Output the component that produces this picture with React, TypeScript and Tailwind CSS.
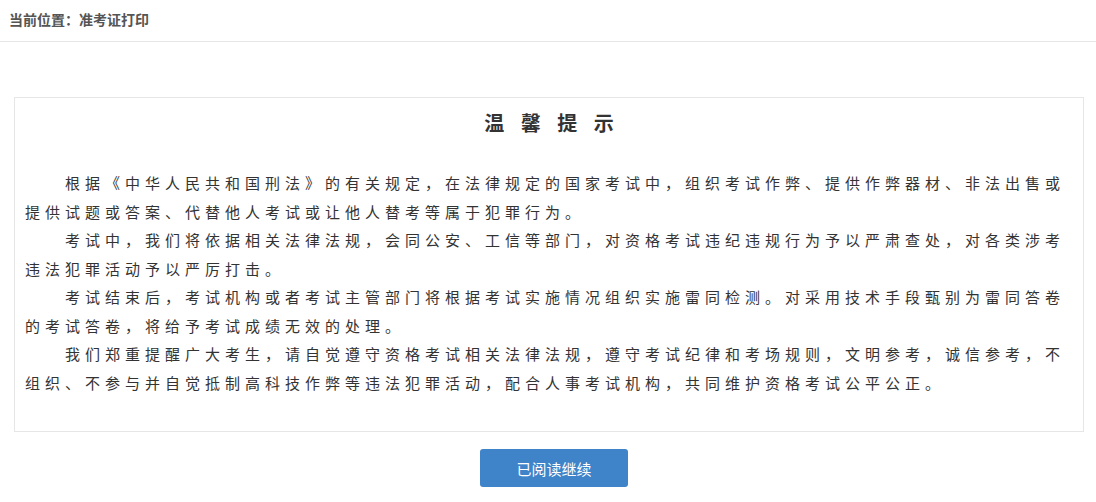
import React from "react";

const paras = [
  "根据《中华人民共和国刑法》的有关规定，在法律规定的国家考试中，组织考试作弊、提供作弊器材、非法出售或提供试题或答案、代替他人考试或让他人替考等属于犯罪行为。",
  "考试中，我们将依据相关法律法规，会同公安、工信等部门，对资格考试违纪违规行为予以严肃查处，对各类涉考违法犯罪活动予以严厉打击。",
  "考试结束后，考试机构或者考试主管部门将根据考试实施情况组织实施雷同检测。对采用技术手段甄别为雷同答卷的考试答卷，将给予考试成绩无效的处理。",
  "我们郑重提醒广大考生，请自觉遵守资格考试相关法律法规，遵守考试纪律和考场规则，文明参考，诚信参考，不组织、不参与并自觉抵制高科技作弊等违法犯罪活动，配合人事考试机构，共同维护资格考试公平公正。",
];

export default function App() {
  return (
    <div
      className="w-[1096px] h-[502px] bg-white overflow-hidden"
      style={{ fontFamily: '"Noto Sans CJK SC", "Noto Sans", sans-serif' }}
    >
      <div className="h-[42px] border-b border-[#e6e6e6] flex items-center pl-[9px] pb-[4px]">
        <span className="text-[14px] font-bold text-[#555555] leading-none">当前位置：准考证打印</span>
      </div>
      <div className="mt-[55px] ml-[14px] w-[1070px] border border-[#e6e6e6] px-[10px] pt-[12px] pb-[34px]">
        <div className="text-center text-[20px] leading-[26px] font-bold text-[#333333] tracking-[6px] pl-[6px]">
          温 馨 提 示
        </div>
        <div className="mt-[33px] text-[15px] leading-[28.5px] tracking-[5px] text-[#333333]">
          {paras.map((p, i) => (
            <p key={i} className="indent-[40px]">
              {p}
            </p>
          ))}
        </div>
      </div>
      <div className="flex justify-center pl-[12px] mt-[17px]">
        <button className="w-[148px] h-[38px] bg-[#3f83c8] rounded-[3px] text-white text-[15px] leading-none">
          已阅读继续
        </button>
      </div>
    </div>
  );
}
